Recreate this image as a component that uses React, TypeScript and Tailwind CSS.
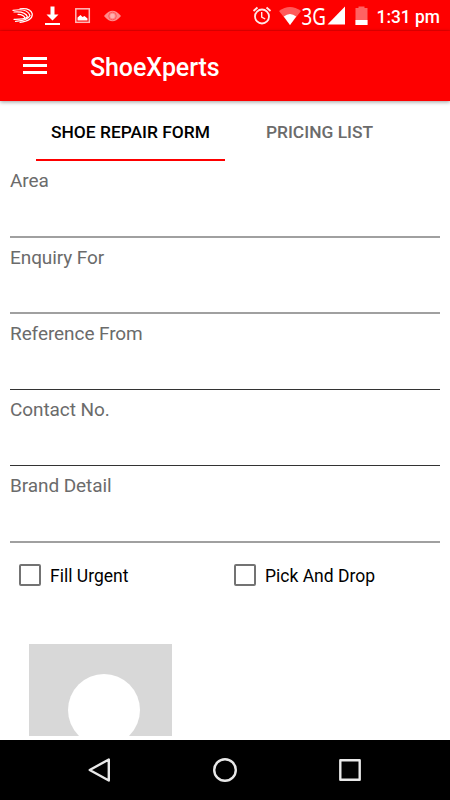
import React from 'react';

interface Field {
  label: string;
  row: string;
  line: string;
}

const fields: Field[] = [
  { label: 'Area', row: 'h-[77px]', line: 'h-[2px] bg-[#a0a0a0]' },
  { label: 'Enquiry For', row: 'h-[76px]', line: 'h-[2px] bg-[#a0a0a0]' },
  { label: 'Reference From', row: 'h-[76px]', line: 'h-px bg-[#333333]' },
  { label: 'Contact No.', row: 'h-[76px]', line: 'h-px bg-[#333333]' },
  { label: 'Brand Detail', row: 'h-[77px]', line: 'h-[2px] bg-[#a0a0a0]' },
];

const StatusBar = () => (
  <div className="h-[31px] shrink-0 bg-[#fe0000] border-b border-[#ee0000]">
    <svg className="overflow-visible" width="450" height="30" viewBox="0 0 450 30" fill="none">
      {/* SwiftKey */}
      <g stroke="#fff" strokeWidth="1.200" strokeLinecap="round">
        <path d="M20 8.800Q30.500 7.500 32.300 14Q32.500 21 20 22.300" />
        <path d="M13 10.300Q27.500 8 30 15.500Q28 20.500 15.500 21.300" />
        <path d="M14 12Q25.500 11 27.500 17Q24 19.500 14 19.300" />
        <path d="M18 14.300Q24 14.500 25 18.300" />
      </g>
      {/* Download */}
      <path d="M50.500 6.500h4v8h4L52.500 20.500L46.500 14.500h4zM45 23h15v2H45z" fill="#fff" />
      {/* Image */}
      <rect x="75.800" y="8.800" width="13.500" height="13.500" stroke="#ffb8b8" strokeWidth="1.500" />
      <path d="M77.500 20.500v-3l3-2.500 2 2 2-1 3 2.500v2z" fill="#fff" />
      {/* Eye */}
      <path d="M104 16Q112.500 5.500 121 16Q112.500 26.500 104 16z" fill="#ff8a8a" />
      <circle cx="112.500" cy="16" r="3.800" stroke="#ff5a5a" strokeWidth="1" />
      <circle cx="112.500" cy="16" r="2.300" fill="#ffb0b0" />
      {/* Alarm */}
      <g stroke="#ffe8e8" strokeWidth="1.800">
        <circle cx="262" cy="16.500" r="7" />
        <path d="M253.500 11l4-3.500M270.500 11l-4-3.500" />
        <path d="M261.700 12v5l3.500 2" strokeWidth="1.400" />
      </g>
      {/* Wifi */}
      <path d="M279 11Q290 3 301 11L290 25z" fill="#ff5a5a" />
      <path d="M283.800 16.500Q290 11.500 296.200 16.500L290 25z" fill="#fff" />
      <text x="301.500" y="24.500" textLength="24.500" lengthAdjust="spacingAndGlyphs" className="fill-white text-[23px] font-['Noto_Sans',sans-serif]">3G</text>
      <path d="M327.500 24.500L345 6.500v18z" fill="#fff" />
      {/* Battery */}
      <path d="M355.500 8h3V6.500h6V8h3v17h-12z" fill="#ff6262" />
      <path d="M355.500 20h12v5h-12z" fill="#fff" />
      <text x="376.500" y="22.700" textLength="63.500" lengthAdjust="spacingAndGlyphs" className="fill-white text-[18px] font-medium">1:31 pm</text>
    </svg>
  </div>
);

const FormField = ({ field }: { field: Field }) => (
  <div className={`${field.row} flex flex-col justify-between`}>
    <label className="pt-[8px] text-[19px] leading-[24px] tracking-[-0.080px] text-[#6b6b6b]">{field.label}</label>
    <div className={field.line} />
  </div>
);

const CheckBox = ({ label }: { label: string }) => (
  <label className="flex w-[215px] items-center gap-[9px]">
    <span className="h-[22px] w-[22px] rounded-[2px] border-2 border-[#737373]" />
    <span className="pt-[2px] text-[17.500px] leading-[22px] text-black">{label}</span>
  </label>
);

const App = () => {
  return (
    <div className="flex h-[800px] w-[450px] flex-col overflow-hidden bg-white font-['Roboto',sans-serif]">
      <StatusBar />

      {/* Toolbar */}
      <header className="flex h-[70px] shrink-0 items-center bg-[#fe0000] pl-[23px] shadow-[0_1px_4px_rgba(0,0,0,0.4)]">
        <button className="flex w-6 flex-col gap-[4px] pb-px">
          <span className="h-[3px] bg-white" />
          <span className="h-[3px] bg-white" />
          <span className="h-[3px] bg-white" />
        </button>
        <h1 className="pl-[43px] pt-[4px] text-[25px] font-medium leading-[30px] tracking-[-0.100px] text-white">ShoeXperts</h1>
      </header>

      {/* Tabs */}
      <nav className="flex h-[60px] shrink-0 pl-9 text-[17.400px] font-medium">
        <button className="w-[189px] border-b-2 border-[#fe0000] pt-[5px] text-black">SHOE REPAIR FORM</button>
        <button className="w-[189px] pt-[3px] text-[#6b6b6b]">PRICING LIST</button>
      </nav>

      {/* Form */}
      <main className="min-h-0 flex-1 overflow-hidden">
        <div className="px-[10px]">
          {fields.map((field) => (
            <FormField key={field.label} field={field} />
          ))}
        </div>
        <div className="flex pl-[19px] pt-[20px]">
          <CheckBox label="Fill Urgent" />
          <CheckBox label="Pick And Drop" />
        </div>
        <div className="ml-[29px] mt-[57px] h-[92px] w-[143px] overflow-hidden bg-[#d8d8d8] pl-[39px] pt-[30px]">
          <div className="h-[72px] w-[72px] rounded-full bg-white" />
        </div>
      </main>

      {/* Navigation bar */}
      <footer className="h-[60px] shrink-0 bg-black">
        <svg width="450" height="60" viewBox="0 0 450 60" fill="none" stroke="#e8e8e8" strokeWidth="2.400" strokeLinejoin="round">
          <path d="M108.800 19.500v21L89.700 30z" />
          <circle cx="225" cy="30" r="10.800" />
          <rect x="340.300" y="20.300" width="19.400" height="19.400" />
        </svg>
      </footer>
    </div>
  );
};

export default App;
